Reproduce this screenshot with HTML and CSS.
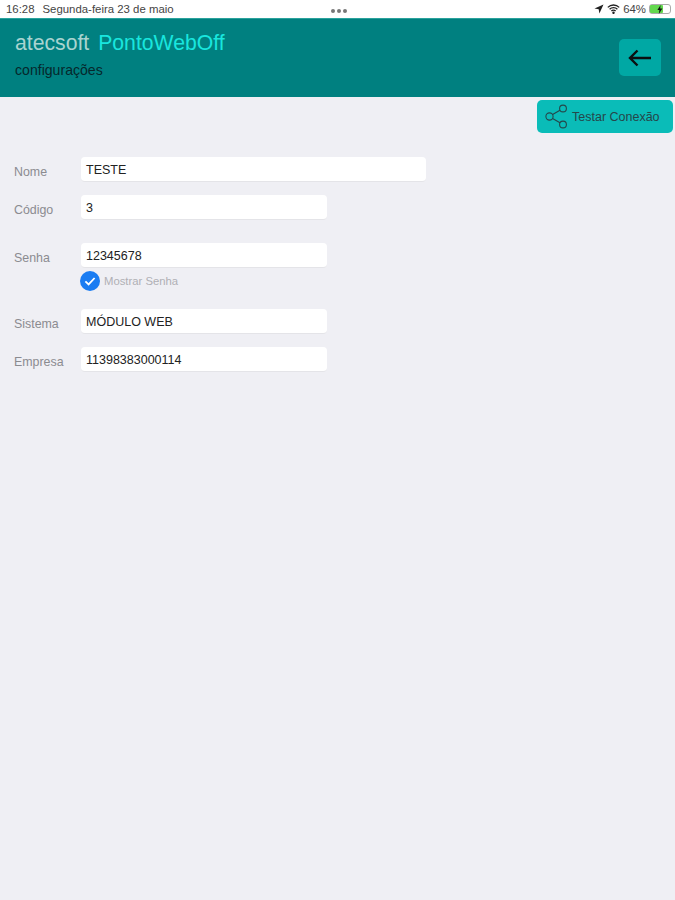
FILE: index.html
```html
<!DOCTYPE html>
<html lang="pt">
<head>
    <meta charset="UTF-8">
    <meta name="viewport" content="width=device-width, initial-scale=1.0">
    <title>PontoWebOff</title>
    <link rel="stylesheet" href="styles.css">
</head>
<body>
<div class="statusbar">
    <div class="status-left">
        <span>16:28</span>
        <span>Segunda-feira 23 de maio</span>
    </div>
    <div class="status-dots"><i></i><i></i><i></i></div>
    <div class="status-right">
        <svg width="10" height="10" viewBox="0 0 10 10"><path d="M9.5.5 .5 4.6l4.2.6.7 4.3z" fill="#222"/></svg>
        <svg width="13" height="10" viewBox="0 0 13 10" fill="none" stroke="#222" stroke-width="1.3"><path d="M.8 3.4a8 8 0 0 1 11.4 0M2.6 5.3a5.4 5.4 0 0 1 7.8 0M4.4 7a2.9 2.9 0 0 1 4.2 0"/><circle cx="6.5" cy="8.8" r=".6" fill="#222"/></svg>
        <span>64%</span>
        <div class="battery">
            <div class="battery-level" style="width: 64%"></div>
            <svg class="battery-bolt" width="6" height="9" viewBox="0 0 6 9"><path d="M3.6 0 .4 5h2L1.8 9l3.6-5.4H3.2z" fill="#111"/></svg>
        </div>
    </div>
</div>

<div class="header">
    <div>
        <div class="brand">
            <span class="brand-name">atecsoft</span>
            <span class="brand-app">PontoWebOff</span>
        </div>
        <div class="subtitle">configurações</div>
    </div>
    <div class="back-btn">
        <svg width="24" height="18" viewBox="0 0 24 18" fill="none" stroke="#0a0f10" stroke-width="2.4"><path d="M23 9H2M9.5 1.5 2 9l7.5 7.5"/></svg>
    </div>
</div>

<div class="toolbar">
    <div class="test-btn">
        <svg width="24" height="25" viewBox="0 0 24 25" fill="none" stroke="#25474a" stroke-width="1.1">
            <circle cx="4.5" cy="12.5" r="3.6"/>
            <circle cx="18" cy="4.5" r="3.4"/>
            <circle cx="18" cy="20.5" r="3.4"/>
            <path d="M7.6 10.6 15 6.3M7.6 14.4 15 18.7"/>
        </svg>
        <span>Testar Conexão</span>
    </div>
</div>

<div class="form">
    <div class="row">
        <label>Nome</label>
        <div class="field field-wide">TESTE</div>
    </div>
    <div class="row row-codigo">
        <label>Código</label>
        <div class="field">3</div>
    </div>
    <div class="row row-senha">
        <label>Senha</label>
        <div class="field">12345678</div>
    </div>
    <div class="show-pwd">
        <svg width="20" height="20" viewBox="0 0 20 20"><circle cx="10" cy="10" r="10" fill="#1a7cf2"/><path d="M5.4 10.4 8.6 13.4 14.6 7" fill="none" stroke="#fff" stroke-width="1.8"/></svg>
        <span>Mostrar Senha</span>
    </div>
    <div class="row row-sistema">
        <label>Sistema</label>
        <div class="field">MÓDULO WEB</div>
    </div>
    <div class="row row-empresa">
        <label>Empresa</label>
        <div class="field">11398383000114</div>
    </div>
</div>
</body>
</html>
```

FILE: styles.css
```css
* {
    margin: 0;
    padding: 0;
    box-sizing: border-box;
}

body {
    width: 675px;
    height: 900px;
    overflow: hidden;
    background-color: #efeff4;
    font-family: "Liberation Sans", Arial, sans-serif;
    color: #111;
}

.statusbar {
    height: 18px;
    background-color: #fff;
    display: flex;
    align-items: center;
    justify-content: space-between;
    padding: 0 4px 1px 6px;
    font-size: 11.4px;
    color: #444;
}

.status-left {
    display: flex;
    gap: 8px;
    width: 280px;
}

.status-dots {
    display: flex;
    gap: 2px;
    margin-top: 4px;
}

.status-dots i {
    width: 4px;
    height: 4px;
    border-radius: 50%;
    background-color: #777;
}

.status-right {
    width: 280px;
    display: flex;
    justify-content: flex-end;
    align-items: center;
    gap: 3px;
}

.battery {
    width: 22px;
    height: 10px;
    border: 1px solid #aaa;
    border-radius: 3px;
    position: relative;
}

.battery-level {
    height: 100%;
    background-color: #62d84e;
    border-radius: 1px;
}

.battery-bolt {
    position: absolute;
    left: 7px;
    top: 0;
}

.header {
    height: 79px;
    background-color: #008080;
    border-top: 1px solid #2aa39d;
    display: flex;
    justify-content: space-between;
    padding: 12px 14px 0 15px;
}

.brand {
    display: flex;
    gap: 9px;
    font-size: 21.2px;
    line-height: 24px;
}

.brand-name {
    color: #a9d4d0;
}

.brand-app {
    color: #19e6de;
}

.subtitle {
    margin-top: 7px;
    font-size: 14.1px;
    line-height: 16px;
    color: #06282c;
}

.back-btn {
    width: 42px;
    height: 37px;
    margin-top: 8px;
    background-color: #00a8a4;
    border-radius: 5px;
    display: flex;
    align-items: center;
    justify-content: center;
}

.toolbar {
    display: flex;
    justify-content: flex-end;
    padding: 3px 2px 0 0;
}

.test-btn {
    width: 136px;
    height: 33px;
    background-color: #0abcb8;
    border-radius: 5px;
    display: flex;
    align-items: center;
    gap: 3px;
    padding-left: 8px;
    font-size: 12.5px;
    color: #25474a;
}

.form {
    padding: 24px 0 0 14px;
}

.row {
    display: flex;
    align-items: center;
}

.row label {
    width: 67px;
    font-size: 12.4px;
    color: #8b8b90;
    padding-top: 4px;
}

.field {
    width: 246px;
    height: 25px;
    background-color: #fff;
    border-radius: 4px;
    border-bottom: 1px solid #e4e4e8;
    padding-left: 5px;
    font-size: 12.5px;
    line-height: 26px;
    color: #222;
}

.field-wide {
    width: 345px;
}

.row-codigo {
    margin-top: 13px;
}

.row-senha {
    margin-top: 23px;
}

.show-pwd {
    display: flex;
    align-items: center;
    gap: 4px;
    margin: 3px 0 0 66px;
    font-size: 11.3px;
    color: #b0b0b5;
}

.row-sistema {
    margin-top: 18px;
}

.row-empresa {
    margin-top: 13px;
}
```
